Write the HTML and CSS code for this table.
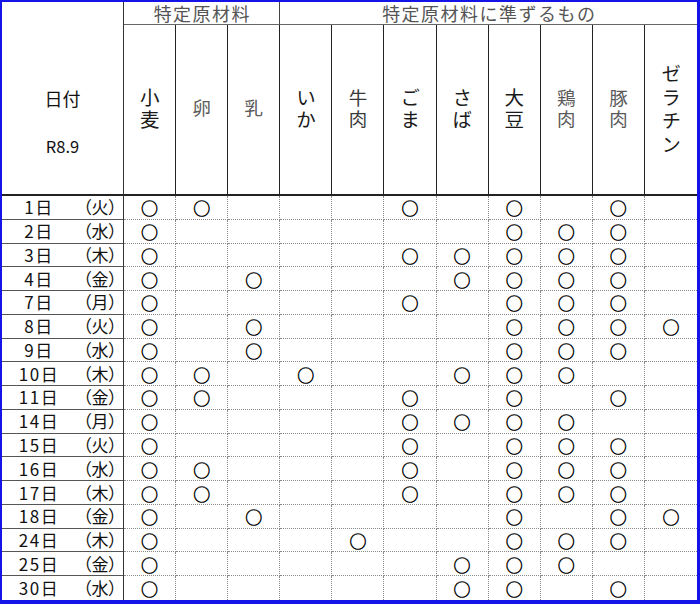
FILE: index.html
```html
<!DOCTYPE html>
<html lang="ja">
<head>
<meta charset="utf-8">
<title>アレルゲン表 R8.9</title>
<link rel="stylesheet" href="styles.css">
</head>
<body>
<div class="sheet">
  <div class="grid">
    <div class="date-head"><div class="dh-title">日付</div><div class="dh-sub">R8.9</div></div>
    <div class="group g1">特定原材料</div>
    <div class="group g2">特定原材料に準ずるもの</div>

    <div class="item"><span class="vt">小麦</span></div>
    <div class="item gray"><span class="vt">卵</span></div>
    <div class="item gray"><span class="vt">乳</span></div>
    <div class="item"><span class="vt">いか</span></div>
    <div class="item mid"><span class="vt">牛肉</span></div>
    <div class="item"><span class="vt">ごま</span></div>
    <div class="item"><span class="vt">さば</span></div>
    <div class="item"><span class="vt">大豆</span></div>
    <div class="item gray"><span class="vt">鶏肉</span></div>
    <div class="item gray"><span class="vt">豚肉</span></div>
    <div class="item last"><span class="vt wide">ゼラチン</span></div>

    <div class="date"><span class="day">1日</span><span class="wd">（火）</span></div>
    <div class="c">○</div><div class="c">○</div><div class="c"></div><div class="c"></div><div class="c"></div><div class="c">○</div><div class="c"></div><div class="c">○</div><div class="c"></div><div class="c">○</div><div class="c e"></div>

    <div class="date"><span class="day">2日</span><span class="wd">（水）</span></div>
    <div class="c">○</div><div class="c"></div><div class="c"></div><div class="c"></div><div class="c"></div><div class="c"></div><div class="c"></div><div class="c">○</div><div class="c">○</div><div class="c">○</div><div class="c e"></div>

    <div class="date"><span class="day">3日</span><span class="wd">（木）</span></div>
    <div class="c">○</div><div class="c"></div><div class="c"></div><div class="c"></div><div class="c"></div><div class="c">○</div><div class="c">○</div><div class="c">○</div><div class="c">○</div><div class="c">○</div><div class="c e"></div>

    <div class="date"><span class="day">4日</span><span class="wd">（金）</span></div>
    <div class="c">○</div><div class="c"></div><div class="c">○</div><div class="c"></div><div class="c"></div><div class="c"></div><div class="c">○</div><div class="c">○</div><div class="c">○</div><div class="c">○</div><div class="c e"></div>

    <div class="date"><span class="day">7日</span><span class="wd">（月）</span></div>
    <div class="c">○</div><div class="c"></div><div class="c"></div><div class="c"></div><div class="c"></div><div class="c">○</div><div class="c"></div><div class="c">○</div><div class="c">○</div><div class="c">○</div><div class="c e"></div>

    <div class="date"><span class="day">8日</span><span class="wd">（火）</span></div>
    <div class="c">○</div><div class="c"></div><div class="c">○</div><div class="c"></div><div class="c"></div><div class="c"></div><div class="c"></div><div class="c">○</div><div class="c">○</div><div class="c">○</div><div class="c e">○</div>

    <div class="date"><span class="day">9日</span><span class="wd">（水）</span></div>
    <div class="c">○</div><div class="c"></div><div class="c">○</div><div class="c"></div><div class="c"></div><div class="c"></div><div class="c"></div><div class="c">○</div><div class="c">○</div><div class="c">○</div><div class="c e"></div>

    <div class="date"><span class="day">10日</span><span class="wd">（木）</span></div>
    <div class="c">○</div><div class="c">○</div><div class="c"></div><div class="c">○</div><div class="c"></div><div class="c"></div><div class="c">○</div><div class="c">○</div><div class="c">○</div><div class="c"></div><div class="c e"></div>

    <div class="date"><span class="day">11日</span><span class="wd">（金）</span></div>
    <div class="c">○</div><div class="c">○</div><div class="c"></div><div class="c"></div><div class="c"></div><div class="c">○</div><div class="c"></div><div class="c">○</div><div class="c"></div><div class="c">○</div><div class="c e"></div>

    <div class="date"><span class="day">14日</span><span class="wd">（月）</span></div>
    <div class="c">○</div><div class="c"></div><div class="c"></div><div class="c"></div><div class="c"></div><div class="c">○</div><div class="c">○</div><div class="c">○</div><div class="c">○</div><div class="c"></div><div class="c e"></div>

    <div class="date"><span class="day">15日</span><span class="wd">（火）</span></div>
    <div class="c">○</div><div class="c"></div><div class="c"></div><div class="c"></div><div class="c"></div><div class="c">○</div><div class="c"></div><div class="c">○</div><div class="c">○</div><div class="c">○</div><div class="c e"></div>

    <div class="date"><span class="day">16日</span><span class="wd">（水）</span></div>
    <div class="c">○</div><div class="c">○</div><div class="c"></div><div class="c"></div><div class="c"></div><div class="c">○</div><div class="c"></div><div class="c">○</div><div class="c">○</div><div class="c">○</div><div class="c e"></div>

    <div class="date"><span class="day">17日</span><span class="wd">（木）</span></div>
    <div class="c">○</div><div class="c">○</div><div class="c"></div><div class="c"></div><div class="c"></div><div class="c">○</div><div class="c"></div><div class="c">○</div><div class="c">○</div><div class="c">○</div><div class="c e"></div>

    <div class="date"><span class="day">18日</span><span class="wd">（金）</span></div>
    <div class="c">○</div><div class="c"></div><div class="c">○</div><div class="c"></div><div class="c"></div><div class="c"></div><div class="c"></div><div class="c">○</div><div class="c"></div><div class="c">○</div><div class="c e">○</div>

    <div class="date"><span class="day">24日</span><span class="wd">（木）</span></div>
    <div class="c">○</div><div class="c"></div><div class="c"></div><div class="c"></div><div class="c">○</div><div class="c"></div><div class="c"></div><div class="c">○</div><div class="c">○</div><div class="c">○</div><div class="c e"></div>

    <div class="date"><span class="day">25日</span><span class="wd">（金）</span></div>
    <div class="c">○</div><div class="c"></div><div class="c"></div><div class="c"></div><div class="c"></div><div class="c"></div><div class="c">○</div><div class="c">○</div><div class="c">○</div><div class="c"></div><div class="c e"></div>

    <div class="date lastrow"><span class="day">30日</span><span class="wd">（水）</span></div>
    <div class="c lastrow">○</div><div class="c lastrow"></div><div class="c lastrow"></div><div class="c lastrow"></div><div class="c lastrow"></div><div class="c lastrow"></div><div class="c lastrow">○</div><div class="c lastrow">○</div><div class="c lastrow"></div><div class="c lastrow">○</div><div class="c e lastrow"></div>
  </div>
</div>
</body>
</html>
```

FILE: styles.css
```css
* { box-sizing: border-box; }

html, body {
  margin: 0;
  padding: 0;
  background: #fff;
}

body {
  width: 700px;
  height: 604px;
  font-family: "Noto Sans CJK JP", "Noto Sans", sans-serif;
  color: #111;
}

.sheet {
  width: 700px;
  height: 604px;
  border-style: solid;
  border-color: #1414e6;
  border-width: 2px 3px 4px 2px;
  background: #fff;
}

.grid {
  display: grid;
  grid-template-columns: 122px repeat(11, 1fr);
  grid-template-rows: 23px 171px repeat(17, 1fr);
  height: 598px;
}

.date-head {
  grid-column: 1;
  grid-row: 1 / 3;
  border-right: 1px solid #333;
  border-bottom: 2px solid #222;
  display: flex;
  flex-direction: column;
  align-items: center;
  justify-content: flex-start;
  padding-top: 86px;
}

.dh-title {
  font-size: 18px;
  line-height: 20px;
}

.dh-sub {
  font-size: 16.5px;
  line-height: 20px;
  margin-top: 28px;
}

.group {
  grid-row: 1;
  font-size: 18px;
  line-height: 21px;
  padding-top: 1px;
  letter-spacing: 1.5px;
  text-indent: 1.5px;
  color: #555;
  text-align: center;
  border-bottom: 1px solid #666;
  white-space: nowrap;
}

.g1 {
  grid-column: 2 / 5;
  border-right: 1px solid #444;
}

.g2 {
  grid-column: 5 / 13;
}

.item {
  grid-row: 2;
  border-right: 1px solid #222;
  border-bottom: 2px solid #222;
  display: flex;
  align-items: center;
  justify-content: center;
  font-size: 19.5px;
  color: #1a1a1a;
  padding-bottom: 2px;
}

.vt {
  writing-mode: vertical-rl;
  text-orientation: upright;
  letter-spacing: 2px;
  padding-top: 2px;
  line-height: 1.2;
}

.vt.wide {
  letter-spacing: 4px;
  padding-top: 4px;
}

.item.gray {
  color: #5a5a5a;
  font-size: 18.5px;
}

.item.mid {
  color: #3a3a3a;
  font-size: 18.5px;
}

.item.last {
  border-right: 0;
}

.date {
  grid-column: 1;
  border-right: 1px solid #333;
  border-bottom: 1px solid #555;
  display: flex;
  align-items: center;
  font-size: 17px;
  line-height: 20px;
  white-space: nowrap;
}

.day {
  width: 73px;
  text-align: center;
  letter-spacing: 1.5px;
  padding-left: 1px;
}

.wd {
  width: 48px;
  text-align: left;
  letter-spacing: -0.5px;
}

.c {
  border-right: 1px dotted #8a8a8a;
  border-bottom: 1px dotted #8a8a8a;
  display: flex;
  align-items: center;
  justify-content: center;
  font-size: 17px;
  line-height: 20px;
  padding-top: 2px;
  color: #000;
  -webkit-text-stroke: 0.45px #000;
}

.c.e {
  border-right: 0;
}

.lastrow {
  border-bottom: 0;
}
```
